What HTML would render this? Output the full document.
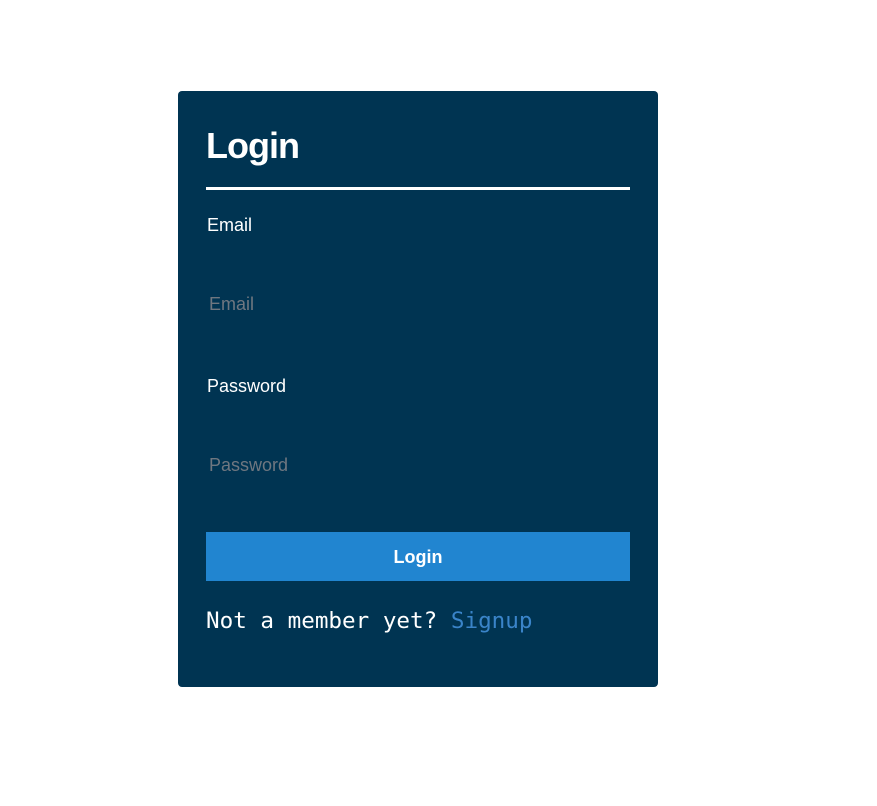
<!DOCTYPE html>
<html><head><style>
html,body{margin:0;padding:0;background:#fff;width:877px;height:806px;overflow:hidden}
.card{position:absolute;left:178px;top:91px;width:480px;height:596px;background:#003452;border-radius:4px}
h1{position:absolute;left:28px;top:31px;margin:0;font:bold 36px/48px "Liberation Sans",sans-serif;color:#fff;letter-spacing:-1px}
.hr{position:absolute;left:28px;top:96px;width:424px;height:3px;background:#fff}
.lbl{position:absolute;left:29px;font:18px/22px "Liberation Sans",sans-serif;color:#fff}
.ph{position:absolute;left:31px;font:18px/22px "Liberation Sans",sans-serif;color:#6f7780}
.btn{position:absolute;left:28px;top:441px;width:424px;height:49px;background:#2185d0;color:#fff;font:bold 18px/50px "Liberation Sans",sans-serif;text-align:center}
.foot{position:absolute;left:28px;top:516px;font:22.6px/28px "DejaVu Sans Mono","Liberation Mono",monospace;color:#fff;white-space:pre}
.foot span{color:#3a84c9}
</style></head><body>
<div class="card">
<h1>Login</h1>
<div class="hr"></div>
<div class="lbl" style="top:123px">Email</div>
<div class="ph" style="top:202px">Email</div>
<div class="lbl" style="top:284px">Password</div>
<div class="ph" style="top:363px">Password</div>
<div class="btn">Login</div>
<div class="foot">Not a member yet? <span>Signup</span></div>
</div>
</body></html>
